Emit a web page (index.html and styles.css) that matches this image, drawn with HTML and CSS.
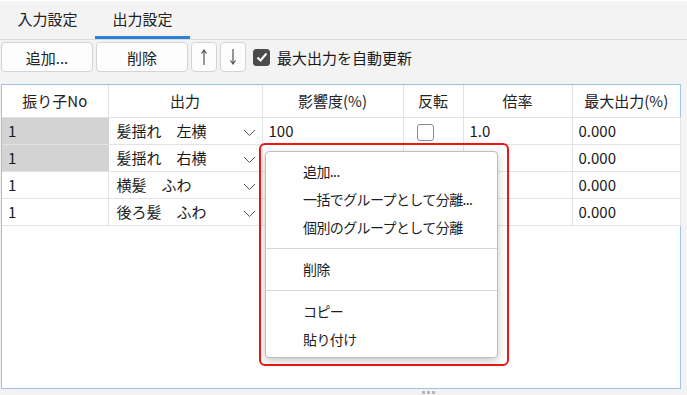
FILE: index.html
```html
<!DOCTYPE html>
<html lang="ja">
  <head>
    <meta charset="UTF-8" />
    <title>出力設定</title>
    <link rel="stylesheet" href="styles.css">
  </head>
  <body>
    <div class="tabs">
      <div class="tab">入力設定</div>
      <div class="tab active">出力設定</div>
    </div>
    <div class="toolbar">
      <button class="btn wide">追加...</button>
      <button class="btn wide">削除</button>
      <button class="btn arrow" title="上へ">
        <svg width="8" height="18" viewBox="0 0 8 18"><path d="M4 2 V17 M1.5 5.5 L4 2 L6.5 5.5" fill="none" stroke="#555" stroke-width="1.2"/></svg>
      </button>
      <button class="btn arrow" title="下へ">
        <svg width="8" height="18" viewBox="0 0 8 18"><path d="M4 1 V16 M1.5 12.5 L4 16 L6.5 12.5" fill="none" stroke="#555" stroke-width="1.2"/></svg>
      </button>
      <label class="auto">
        <span class="check on">
          <svg width="12" height="12" viewBox="0 0 12 12"><polyline points="1.5,6.5 4.5,9.5 10.5,2.5" fill="none" stroke="#fff" stroke-width="2"/></svg>
        </span>
        最大出力を自動更新
      </label>
    </div>
    <div class="grid-wrap">
      <table class="grid">
        <colgroup>
          <col style="width: 106px">
          <col style="width: 154px">
          <col style="width: 141px">
          <col style="width: 60px">
          <col style="width: 109px">
          <col style="width: 108px">
        </colgroup>
        <thead>
          <tr>
            <th>振り子No</th>
            <th>出力</th>
            <th>影響度(%)</th>
            <th>反転</th>
            <th>倍率</th>
            <th>最大出力(%)</th>
          </tr>
        </thead>
        <tbody>
          <tr>
            <td class="sel">1</td>
            <td class="combo"><span>髪揺れ　左横</span><svg class="chev" width="13" height="8" viewBox="0 0 13 8"><polyline points="1,1 6.5,6.5 12,1" fill="none" stroke="#555" stroke-width="1"/></svg></td>
            <td>100</td>
            <td class="flag"><span class="check"></span></td>
            <td>1.0</td>
            <td>0.000</td>
          </tr>
          <!-- メニューの下に隠れるセルは空 -->
          <tr>
            <td class="sel">1</td>
            <td class="combo"><span>髪揺れ　右横</span><svg class="chev" width="13" height="8" viewBox="0 0 13 8"><polyline points="1,1 6.5,6.5 12,1" fill="none" stroke="#555" stroke-width="1"/></svg></td>
            <td></td>
            <td class="flag"><span class="check"></span></td>
            <td></td>
            <td>0.000</td>
          </tr>
          <tr>
            <td>1</td>
            <td class="combo"><span>横髪　ふわ</span><svg class="chev" width="13" height="8" viewBox="0 0 13 8"><polyline points="1,1 6.5,6.5 12,1" fill="none" stroke="#555" stroke-width="1"/></svg></td>
            <td></td>
            <td class="flag"></td>
            <td></td>
            <td>0.000</td>
          </tr>
          <tr>
            <td>1</td>
            <td class="combo"><span>後ろ髪　ふわ</span><svg class="chev" width="13" height="8" viewBox="0 0 13 8"><polyline points="1,1 6.5,6.5 12,1" fill="none" stroke="#555" stroke-width="1"/></svg></td>
            <td></td>
            <td class="flag"></td>
            <td></td>
            <td>0.000</td>
          </tr>
        </tbody>
      </table>
    </div>
    <div class="grip"><i></i><i></i><i></i></div>

    <!-- 右クリックメニュー（赤枠は注目用） -->
    <div class="highlight">
      <div class="menu">
        <div class="item">追加...</div>
        <div class="item">一括でグループとして分離...</div>
        <div class="item">個別のグループとして分離</div>
        <div class="sep"></div>
        <div class="item">削除</div>
        <div class="sep"></div>
        <div class="item">コピー</div>
        <div class="item">貼り付け</div>
      </div>
    </div>
  </body>
</html>
```

FILE: styles.css
```css
* {
  box-sizing: border-box;
}
html, body {
  margin: 0;
  height: 100%;
}
body {
  font-family: 'Noto Sans CJK JP', 'Noto Sans', sans-serif;
  font-size: 15px;
  color: #1a1a1a;
  background: #f3f3f3;
  display: flex;
  flex-direction: column;
  position: relative;
  overflow: hidden;
}
.tabs {
  display: flex;
  height: 40px;
  border-top: 1px solid #fff;
  border-bottom: 1px solid #dadada;
}
.tab {
  width: 95px;
  text-align: center;
  line-height: 36px;
  color: #222;
}
.tab.active {
  border-bottom: 3px solid #2f7fd6;
}
.toolbar {
  display: flex;
  align-items: center;
  gap: 3px;
  padding: 2px 0 0 1px;
  height: 32px;
}
.btn {
  font: inherit;
  color: #222;
  height: 30px;
  background: #fdfdfd;
  border: 1px solid #d4d4d4;
  border-radius: 4px;
  padding: 0;
}
.btn.wide {
  width: 92px;
}
.btn.arrow {
  width: 26px;
  display: flex;
  align-items: center;
  justify-content: center;
}
.auto {
  display: flex;
  align-items: center;
  gap: 7px;
  margin-left: 4px;
}
.check {
  display: inline-flex;
  align-items: center;
  justify-content: center;
  width: 17px;
  height: 17px;
  border: 1px solid #8a8a8a;
  border-radius: 3px;
  background: #fff;
  vertical-align: middle;
}
.check.on {
  background: #4b4b4b;
  border-color: #4b4b4b;
}
.grid-wrap {
  flex: 1;
  margin: 12px 6px 0 1px;
  background: #fff;
  border: 1px solid #9cc3ee;
}
.grid {
  border-collapse: collapse;
  table-layout: fixed;
  width: 678px;
}
.grid th {
  font-weight: normal;
  height: 32px;
  padding: 0;
  color: #222;
  border-right: 1px solid #e3e3e3;
  border-bottom: 1px solid #e3e3e3;
}
.grid th:last-child {
  border-right: none;
}
.grid td {
  height: 27px;
  padding: 0 0 0 6px;
  border-right: 1px solid #e3e3e3;
  border-bottom: 1px solid #e3e3e3;
  white-space: nowrap;
}
.grid td.sel {
  background: #d3d3d3;
  border-right-color: #d3d3d3;
}
.grid td.combo {
  padding: 0 6px 0 8px;
}
.combo span {
  display: inline-block;
  width: 126px;
}
.chev {
  vertical-align: middle;
}
.grid td.flag {
  padding: 0 0 0 13px;
}
.grip {
  height: 6px;
  display: flex;
  justify-content: center;
  align-items: center;
  gap: 2px;
  padding-left: 170px;
}
.grip i {
  width: 3px;
  height: 3px;
  background: #b8b8b8;
}
.highlight {
  position: absolute;
  left: 259px;
  top: 143px;
  width: 250px;
  height: 223px;
  border: 2px solid #f01414;
  border-radius: 6px;
}
.menu {
  position: absolute;
  left: 4px;
  top: 6px;
  width: 233px;
  height: 207px;
  background: #fff;
  border: 1px solid #bdbdbd;
  border-radius: 4px;
  padding: 5px 0 4px;
  box-shadow: 0 3px 8px rgba(0, 0, 0, 0.22);
}
.item {
  height: 28px;
  line-height: 28px;
  padding-left: 37px;
  font-size: 14px;
  letter-spacing: -0.6px;
  color: #1e1e1e;
}
.sep {
  height: 1px;
  background: #d6d6d6;
  margin: 7px 0 6px;
}
```
